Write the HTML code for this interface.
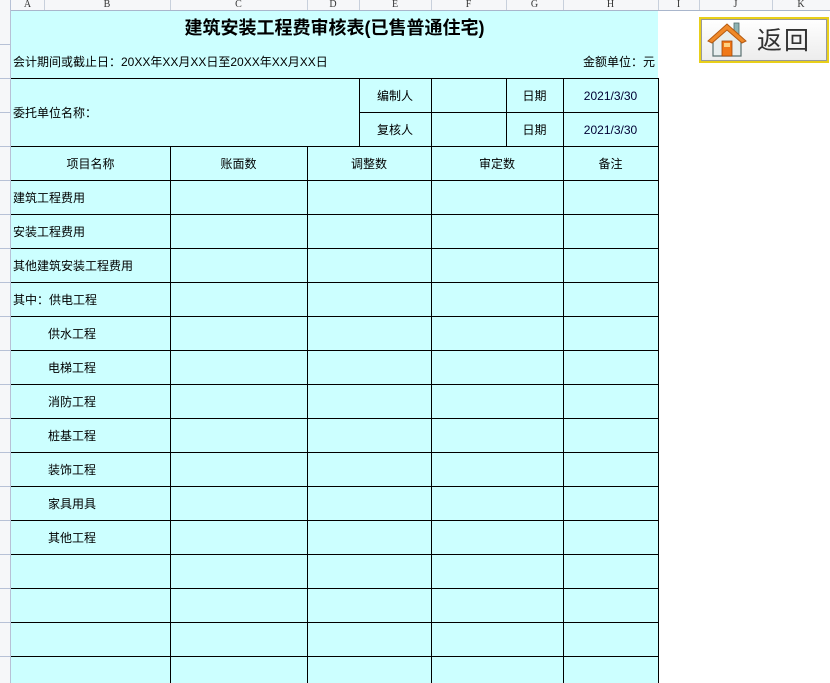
<!DOCTYPE html>
<html><head><meta charset="utf-8">
<style>
*{margin:0;padding:0;box-sizing:border-box}
body{width:830px;height:683px;overflow:hidden;background:#fff;position:relative;font-family:"Liberation Sans","Noto Sans CJK SC",sans-serif;font-size:12px;color:#000}
.a{position:absolute}
.h{position:absolute;height:1px;background:#000}
.v{position:absolute;width:1px;background:#000}
.t{position:absolute;white-space:nowrap;line-height:34px;height:34px}
.c{text-align:center}
.ch{position:absolute;top:0;height:10px;font-size:10px;line-height:9px;color:#333;text-align:center;font-family:"Liberation Serif",serif;overflow:hidden}
.cs{position:absolute;top:0;width:1px;height:10px;background:#c8d0dc}
.rl{position:absolute;left:0;width:10px;height:1px;background:#b7c1d6}
</style></head><body>
<div class="a" style="left:0;top:0;width:830px;height:10px;background:#f6f7f9"></div>
<div class="a" style="left:0;top:10px;width:830px;height:1px;background:#a9b6cc"></div>
<div class="a" style="left:0;top:0;width:11px;height:683px;background:#f6f7f9"></div>
<div class="a" style="left:10px;top:0;width:1px;height:683px;background:#b7c1d6"></div>
<div class="cs" style="left:44px"></div><div class="cs" style="left:170px"></div><div class="cs" style="left:307px"></div><div class="cs" style="left:359px"></div><div class="cs" style="left:431px"></div><div class="cs" style="left:506px"></div><div class="cs" style="left:563px"></div><div class="cs" style="left:658px"></div><div class="cs" style="left:699px"></div><div class="cs" style="left:772px"></div>
<div class="ch" style="left:11px;width:33px">A</div><div class="ch" style="left:44px;width:126px">B</div><div class="ch" style="left:170px;width:137px">C</div><div class="ch" style="left:307px;width:52px">D</div><div class="ch" style="left:359px;width:72px">E</div><div class="ch" style="left:431px;width:75px">F</div><div class="ch" style="left:506px;width:57px">G</div><div class="ch" style="left:563px;width:95px">H</div><div class="ch" style="left:658px;width:41px">I</div><div class="ch" style="left:699px;width:73px">J</div><div class="ch" style="left:772px;width:58px">K</div>
<div class="rl" style="top:44px"></div><div class="rl" style="top:78px"></div><div class="rl" style="top:112px"></div><div class="rl" style="top:146px"></div><div class="rl" style="top:180px"></div><div class="rl" style="top:214px"></div><div class="rl" style="top:248px"></div><div class="rl" style="top:282px"></div><div class="rl" style="top:316px"></div><div class="rl" style="top:350px"></div><div class="rl" style="top:384px"></div><div class="rl" style="top:418px"></div><div class="rl" style="top:452px"></div><div class="rl" style="top:486px"></div><div class="rl" style="top:520px"></div><div class="rl" style="top:554px"></div><div class="rl" style="top:588px"></div><div class="rl" style="top:622px"></div><div class="rl" style="top:656px"></div>
<div class="a" style="left:11px;top:11px;width:647px;height:672px;background:#ccffff"></div>
<div class="a" style="left:11px;top:14px;width:647px;text-align:center;font-size:18px;font-weight:bold;line-height:28px;font-family:'Liberation Sans','Noto Sans CJK SC',sans-serif">建筑安装工程费审核表(已售普通住宅)</div>
<div class="a" style="left:13px;top:54px;line-height:16px">会计期间或截止日：20XX年XX月XX日至20XX年XX月XX日</div>
<div class="a" style="left:583px;top:54px;line-height:16px">金额单位：元</div>
<div class="h" style="left:11px;top:78px;width:648px"></div>
<div class="h" style="left:359px;top:112px;width:300px"></div>
<div class="h" style="left:11px;top:146px;width:648px"></div>
<div class="h" style="left:11px;top:180px;width:648px"></div>
<div class="h" style="left:11px;top:214px;width:648px"></div>
<div class="h" style="left:11px;top:248px;width:648px"></div>
<div class="h" style="left:11px;top:282px;width:648px"></div>
<div class="h" style="left:11px;top:316px;width:648px"></div>
<div class="h" style="left:11px;top:350px;width:648px"></div>
<div class="h" style="left:11px;top:384px;width:648px"></div>
<div class="h" style="left:11px;top:418px;width:648px"></div>
<div class="h" style="left:11px;top:452px;width:648px"></div>
<div class="h" style="left:11px;top:486px;width:648px"></div>
<div class="h" style="left:11px;top:520px;width:648px"></div>
<div class="h" style="left:11px;top:554px;width:648px"></div>
<div class="h" style="left:11px;top:588px;width:648px"></div>
<div class="h" style="left:11px;top:622px;width:648px"></div>
<div class="h" style="left:11px;top:656px;width:648px"></div>
<div class="v" style="left:359px;top:78px;height:68px"></div>
<div class="v" style="left:431px;top:78px;height:605px"></div>
<div class="v" style="left:506px;top:78px;height:68px"></div>
<div class="v" style="left:563px;top:78px;height:605px"></div>
<div class="v" style="left:658px;top:78px;height:605px"></div>
<div class="v" style="left:170px;top:146px;height:537px"></div>
<div class="v" style="left:307px;top:146px;height:537px"></div>
<div class="t" style="left:13px;top:96px">委托单位名称：</div>
<div class="t c" style="left:359px;top:79px;width:72px">编制人</div>
<div class="t c" style="left:359px;top:113px;width:72px">复核人</div>
<div class="t c" style="left:506px;top:79px;width:57px">日期</div>
<div class="t c" style="left:506px;top:113px;width:57px">日期</div>
<div class="t c" style="left:563px;top:79px;width:95px;color:#000033">2021/3/30</div>
<div class="t c" style="left:563px;top:113px;width:95px;color:#000033">2021/3/30</div>
<div class="t c" style="left:11px;top:147px;width:159px">项目名称</div>
<div class="t c" style="left:170px;top:147px;width:137px">账面数</div>
<div class="t c" style="left:307px;top:147px;width:124px">调整数</div>
<div class="t c" style="left:431px;top:147px;width:132px">审定数</div>
<div class="t c" style="left:563px;top:147px;width:95px">备注</div>
<div class="t" style="left:13px;top:181px">建筑工程费用</div>
<div class="t" style="left:13px;top:215px">安装工程费用</div>
<div class="t" style="left:13px;top:249px">其他建筑安装工程费用</div>
<div class="t" style="left:13px;top:283px">其中：供电工程</div>
<div class="t" style="left:48px;top:317px">供水工程</div>
<div class="t" style="left:48px;top:351px">电梯工程</div>
<div class="t" style="left:48px;top:385px">消防工程</div>
<div class="t" style="left:48px;top:419px">桩基工程</div>
<div class="t" style="left:48px;top:453px">装饰工程</div>
<div class="t" style="left:48px;top:487px">家具用具</div>
<div class="t" style="left:48px;top:521px">其他工程</div>
<div class="a" style="left:699px;top:17px;width:130px;height:46px;border:2px solid #e8cf1a;background:linear-gradient(#ffffff,#ececec);box-shadow:inset 0 0 0 1px #999"></div>
<svg class="a" style="left:706px;top:20px" width="42" height="40" viewBox="0 0 42 40">
<rect x="28" y="3" width="5" height="12" fill="#8fb4b4" stroke="#506a6a" stroke-width="0.8"/>
<path d="M7 20 L7 36 L35 36 L35 20 L21 8 Z" fill="#e8eeee" stroke="#5a7070" stroke-width="1.2"/>
<path d="M2 21 L21 4 L40 21 L36 23 L21 10 L6 23 Z" fill="#f08a2a" stroke="#b55a10" stroke-width="1"/>
<rect x="16" y="21" width="10" height="15" fill="#f07818" stroke="#a04808" stroke-width="0.8"/>
<rect x="18" y="23" width="6" height="4" fill="#ffd080"/>
</svg>
<div class="a" style="left:757px;top:25px;font-size:25px;line-height:32px;color:#333;letter-spacing:2px;font-weight:normal">返回</div>
</body></html>
